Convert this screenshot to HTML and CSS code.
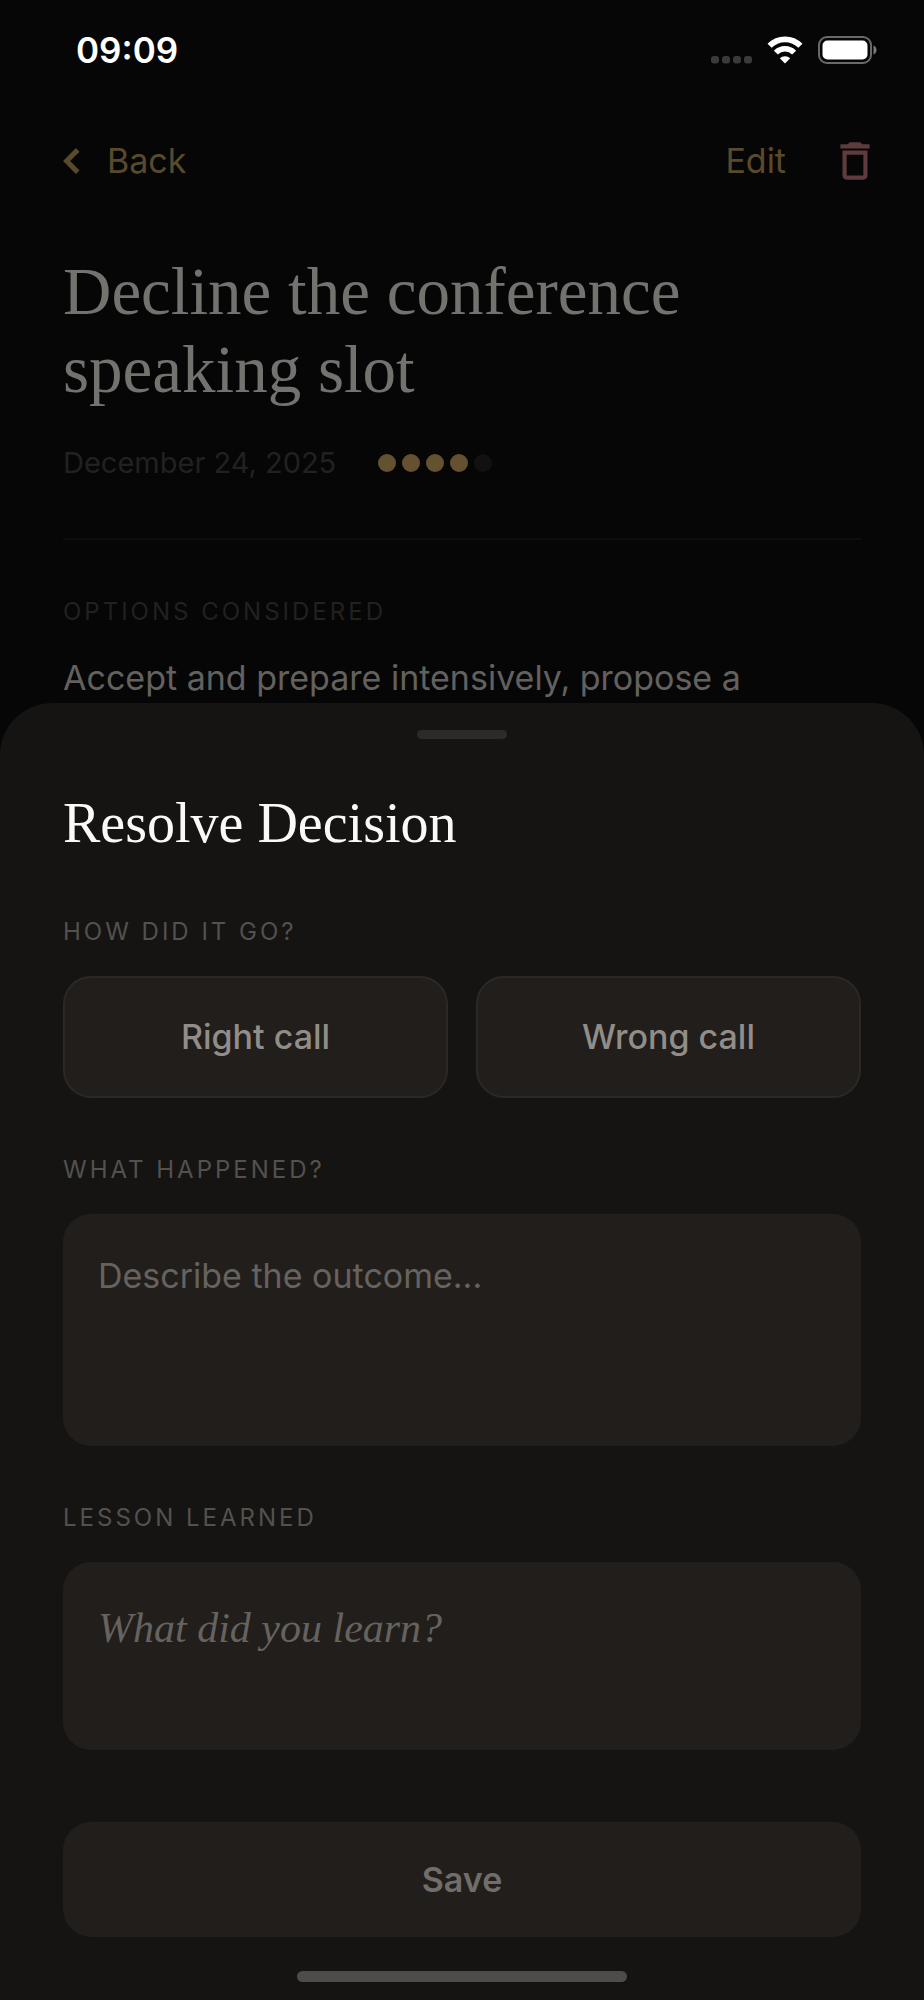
FILE: index.html
```html
<!DOCTYPE html>
<html lang="en">
	<head>
		<meta charset="UTF-8">
		<meta name="viewport" content="width=device-width, initial-scale=1">
		<title>Resolve Decision</title>
		<link rel="stylesheet" href="styles.css">
	</head>
	<body>
		<div class="status-bar">
			<span class="status-time">09:09</span>
			<div class="status-icons">
				<svg class="icon-signal" width="41" height="28" viewBox="0 0 41 28">
					<rect x="0" y="20" width="8" height="7.5" rx="3"/>
					<rect x="11" y="20" width="8" height="7.5" rx="3"/>
					<rect x="22" y="20" width="8" height="7.5" rx="3"/>
					<rect x="33" y="20" width="8" height="7.5" rx="3"/>
				</svg>
				<svg class="icon-wifi" width="36" height="28" viewBox="0 0 36 28">
					<path d="M2.6 9.8 A21.500 21.500 0 0 1 33.400 9.800" stroke-width="5.8"/>
					<path d="M8.900 16.600 A12.800 12.800 0 0 1 27.100 16.600" stroke-width="5.6"/>
					<path class="wifi-dot" d="M18 27.500 L12.800 22.200 A7.600 7.600 0 0 1 23.200 22.200 Z"/>
				</svg>
				<svg class="icon-battery" width="60" height="28" viewBox="0 0 60 28">
					<rect class="battery-frame" x="1" y="1" width="52" height="26" rx="8"/>
					<rect class="battery-level" x="4.500" y="4.500" width="45" height="19" rx="5"/>
					<path class="battery-cap" d="M55.500 9.500 C59.500 11 59.500 17 55.500 18.500 Z"/>
				</svg>
			</div>
		</div>

		<!-- decision detail, dimmed behind the sheet -->
		<div class="nav">
			<a href="#" class="nav-back">
				<svg width="50" height="50" viewBox="0 0 24 24"><path d="M15.600 7.500L13.900 5.800 7.700 12l6.200 6.200 1.700-1.700L11.100 12z"/></svg>
				Back
			</a>
			<div class="nav-actions">
				<a href="#" class="nav-edit">Edit</a>
				<button type="button" class="nav-delete" aria-label="Delete">
					<svg width="50" height="50" viewBox="0 0 24 24"><path d="M6 19c0 1.100.9 2 2 2h8c1.100 0 2-.9 2-2V7H6v12zM8 9h8v10H8V9zm7.500-5l-1-1h-5l-1 1H5v2h14V4z"/></svg>
				</button>
			</div>
		</div>
		<div class="detail">
			<h1 class="detail-title">Decline the conference speaking slot</h1>
			<div class="detail-meta">
				<span>December 24, 2025</span>
				<div class="rating">
					<i class="dot dot-on"></i>
					<i class="dot dot-on"></i>
					<i class="dot dot-on"></i>
					<i class="dot dot-on"></i>
					<i class="dot"></i>
				</div>
			</div>
			<div class="detail-section">
				<h2 class="label label-dim">OPTIONS CONSIDERED</h2>
				<p class="detail-text">Accept and prepare intensively, propose a</p>
			</div>
		</div>

		<!-- bottom sheet -->
		<form class="sheet">
			<div class="sheet-handle"></div>
			<h2 class="sheet-title">Resolve Decision</h2>
			<div class="field" role="group" aria-labelledby="result-label">
				<div class="label" id="result-label">HOW DID IT GO?</div>
				<div class="choices">
					<button type="button" class="choice">Right call</button>
					<button type="button" class="choice">Wrong call</button>
				</div>
			</div>
			<div class="field">
				<label class="label" for="outcome">WHAT HAPPENED?</label>
				<textarea class="input input-outcome" id="outcome" placeholder="Describe the outcome..."></textarea>
			</div>
			<div class="field">
				<label class="label" for="lesson">LESSON LEARNED</label>
				<textarea class="input input-lesson" id="lesson" placeholder="What did you learn?"></textarea>
			</div>
			<button type="submit" class="save">Save</button>
			<div class="home-bar"></div>
		</form>
	</body>
</html>
```
FILE: styles.css
```css
* {
	box-sizing: border-box;
}
body, h1, h2, p {
	margin: 0;
	font-weight: normal;
}
body {
	position: relative;
	min-height: 100vh;
	background: #060606;
	font-family: Inter, "Liberation Sans", sans-serif;
	font-size: 34px;
	line-height: 48px;
}
a {
	color: inherit;
	text-decoration: none;
}
button, textarea {
	font: inherit;
	border: 0;
}
svg {
	display: block;
}

/* status bar */
.status-bar {
	display: flex;
	justify-content: space-between;
	align-items: center;
	height: 100px;
	padding: 0 46px 0 76px;
	color: #fff;
}
.status-time {
	font-size: 35px;
	font-weight: 600;
}
.status-icons {
	display: flex;
	gap: 15px;
}
.icon-signal {
	fill: #3a3a3a;
}
.icon-wifi {
	fill: none;
	stroke: #fff;
}
.wifi-dot {
	fill: #fff;
	stroke: none;
}
.battery-frame {
	fill: none;
	stroke: #6a6a6a;
	stroke-width: 2;
}
.battery-level {
	fill: #fff;
}
.battery-cap {
	fill: #7a7a7a;
}

/* nav */
.nav {
	display: flex;
	justify-content: space-between;
	align-items: center;
	margin-top: 36px;
	padding: 0 44px 0 47px;
	color: #5a4a2c;
}
.nav svg {
	fill: currentColor;
}
.nav-back {
	display: flex;
	align-items: center;
	gap: 10px;
}
.nav-actions {
	display: flex;
	align-items: center;
	gap: 44px;
}
.nav-delete {
	padding: 0;
	background: none;
	color: #5f3b3d;
}

/* detail */
.detail {
	padding: 66px 63px 0;
}
.detail-title {
	font-family: "Liberation Serif", serif;
	font-size: 67px;
	line-height: 78px;
	color: #72726f;
}
.detail-meta {
	display: flex;
	align-items: center;
	gap: 42px;
	margin-top: 37px;
	padding-bottom: 57px;
	border-bottom: 2px solid #0e0e0d;
	font-size: 29px;
	line-height: 36px;
	color: #222120;
}
.rating {
	display: flex;
	gap: 6px;
}
.dot {
	width: 18px;
	height: 18px;
	border-radius: 50%;
	background: #111110;
}
.dot-on {
	background: #645130;
}
.detail-section {
	padding-top: 56px;
}
.detail-text {
	margin-top: 26px;
	color: #63615e;
}
.label {
	display: block;
	font-size: 24px;
	line-height: 32px;
	letter-spacing: 3px;
	color: #53514e;
}
.label-dim {
	color: #222120;
}

/* sheet */
.sheet {
	position: absolute;
	left: 0;
	right: 0;
	bottom: 0;
	display: flex;
	flex-direction: column;
	gap: 56px;
	padding: 27px 63px 18px;
	border-radius: 52px 52px 0 0;
	background: #151412;
}
.sheet-handle {
	align-self: center;
	width: 90px;
	height: 9px;
	border-radius: 5px;
	background: #2c2b29;
}
.sheet-title {
	margin: -4px 0 5px;
	font-family: "Liberation Serif", serif;
	font-size: 56px;
	line-height: 64px;
	color: #faf9f6;
}
.field {
	display: flex;
	flex-direction: column;
	gap: 28px;
}
.choices {
	display: flex;
	gap: 28px;
}
.choice {
	flex: 1;
	height: 122px;
	border: 2px solid #2b2926;
	border-radius: 28px;
	background: #221e1b;
	color: #918d89;
	font-weight: 500;
}
.input {
	display: block;
	width: 100%;
	padding: 38px 35px;
	border-radius: 28px;
	background: #221e1b;
	color: #faf9f6;
	resize: none;
}
.input::placeholder {
	color: #66625f;
}
.input-outcome {
	height: 232px;
}
.input-lesson {
	height: 188px;
	padding-top: 42px;
	font-family: "Liberation Serif", serif;
	font-size: 42px;
	font-style: italic;
}
.save {
	height: 115px;
	margin-top: 16px;
	border-radius: 28px;
	background: #221e1b;
	color: #716d6a;
	font-weight: 600;
}
.home-bar {
	align-self: center;
	width: 330px;
	height: 11px;
	margin-top: -22px;
	border-radius: 6px;
	background: #4d4c4a;
}
```
